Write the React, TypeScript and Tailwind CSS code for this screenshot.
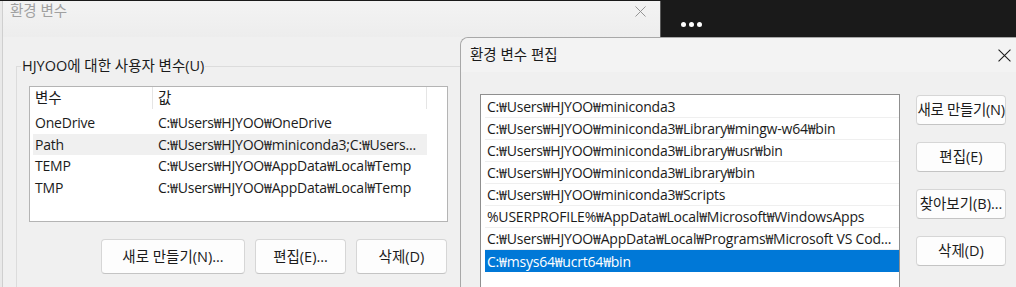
const userVars = [
  { name: 'OneDrive', value: 'C:₩Users₩HJYOO₩OneDrive', hot: false },
  { name: 'Path', value: 'C:₩Users₩HJYOO₩miniconda3;C:₩Users...', hot: true },
  { name: 'TEMP', value: 'C:₩Users₩HJYOO₩AppData₩Local₩Temp', hot: false },
  { name: 'TMP', value: 'C:₩Users₩HJYOO₩AppData₩Local₩Temp', hot: false },
]

const pathEntries = [
  'C:₩Users₩HJYOO₩miniconda3',
  'C:₩Users₩HJYOO₩miniconda3₩Library₩mingw-w64₩bin',
  'C:₩Users₩HJYOO₩miniconda3₩Library₩usr₩bin',
  'C:₩Users₩HJYOO₩miniconda3₩Library₩bin',
  'C:₩Users₩HJYOO₩miniconda3₩Scripts',
  '%USERPROFILE%₩AppData₩Local₩Microsoft₩WindowsApps',
  'C:₩Users₩HJYOO₩AppData₩Local₩Programs₩Microsoft VS Cod...',
  'C:₩msys64₩ucrt64₩bin',
]

function CloseIcon({ className }: { className: string }) {
  return (
    <svg viewBox="0 0 12 12" className={className} fill="none" stroke="currentColor" strokeWidth="1">
      <path d="M0.5 0.5 L11.5 11.5 M11.5 0.5 L0.5 11.5" />
    </svg>
  )
}

function WinButton({ label, className }: { label: string; className: string }) {
  return (
    <button
      className={`flex items-center justify-center whitespace-nowrap rounded-[4px] border border-[#d6d6d6] border-b-[#c4c4c4] bg-[#fdfdfd] text-[14.5px] text-[#1b1b1b] ${className}`}
    >
      {label}
    </button>
  )
}

export default function App() {
  return (
    <div className="relative h-[287px] w-[1016px] overflow-hidden bg-[#1a1a1a] font-['Open_Sans','Noto_Sans_CJK_KR',sans-serif] text-[#1b1b1b]">
      {/* desktop bits behind the windows */}
      <div className="absolute left-[681px] top-[22px] flex gap-[3px]">
        <span className="h-[5px] w-[5px] rounded-full bg-white" />
        <span className="h-[5px] w-[5px] rounded-full bg-white" />
        <span className="h-[5px] w-[5px] rounded-full bg-white" />
      </div>

      {/* back window: 환경 변수 (inactive) */}
      <div className="absolute left-0 top-[1px] flex h-[290px] w-[661px] flex-col border-r border-[#5a5a5a] bg-[#e9e9e9] pl-[2px]">
        <div className="flex h-full flex-col border-l border-[#cfcfcf] bg-[#f0f0f0]">
          <div className="flex h-[36px] shrink-0 items-start justify-between bg-gradient-to-b from-[#f3f3f3] to-[#ededed] pl-[7px] pr-[14px]">
            <span className="text-[14.5px] leading-[20px] text-[#a0a0a0]">환경 변수</span>
            <CloseIcon className="mt-[5px] h-[11px] w-[11px] text-[#8c8c8c]" />
          </div>

          <fieldset className="ml-[13px] mt-[19px] w-[640px] grow border border-[#dcdcdc]">
            <legend className="ml-[4px] px-[1px] text-[14.5px] leading-[20px]">HJYOO에 대한 사용자 변수(U)</legend>
            <div className="pl-[12px]">
              <div className="mt-[10px] h-[136px] w-[419px] border border-[#b4b4b4] bg-white">
                <div className="flex h-[22px] text-[14.5px] leading-[22px]">
                  <div className="w-[123px] border-r border-[#e5e5e5] pl-[5px]">변수</div>
                  <div className="w-[274px] border-r border-[#e5e5e5] pl-[5px]">값</div>
                </div>
                <div className="mt-[3px] pl-[3px]">
                  {userVars.map((v) => (
                    <div
                      key={v.name}
                      className={`flex h-[21.5px] w-[394px] items-center overflow-hidden text-[14px] tracking-[-0.2px] ${v.hot ? 'bg-[#f0f0f0]' : ''}`}
                    >
                      <span className="w-[125px] shrink-0 pl-[2px]">{v.name}</span>
                      <span className="whitespace-nowrap">{v.value}</span>
                    </div>
                  ))}
                </div>
              </div>
              <div className="mt-[17px] flex w-[418px] justify-end gap-[10px]">
                <WinButton label="새로 만들기(N)..." className="h-[35px] w-[144px]" />
                <WinButton label="편집(E)..." className="h-[35px] w-[91px]" />
                <WinButton label="삭제(D)" className="h-[35px] w-[91px]" />
              </div>
            </div>
          </fieldset>
        </div>
      </div>

      {/* front window: 환경 변수 편집 */}
      <div className="absolute bottom-[-4px] left-[460px] right-[-4px] top-[37px] flex flex-col rounded-tl-[8px] border-l border-t border-[#a8a8a8] bg-[#f0f0f0]">
        <div className="flex h-[34px] shrink-0 items-center justify-between rounded-tl-[8px] bg-[#f3f3f3] pl-[9px] pr-[9px]">
          <span className="text-[14.5px] leading-[20px]">환경 변수 편집</span>
          <CloseIcon className="h-[13px] w-[13px] text-[#1b1b1b]" />
        </div>
        <div className="mt-[22px] flex items-start pl-[19px]">
          <div className="h-[200px] w-[420px] border border-[#8f8f8f] bg-white pt-[1px] pl-[4px]">
            {pathEntries.map((p, i) => {
              const selected = i === pathEntries.length - 1
              return (
                <div
                  key={p}
                  className={`flex h-[22px] items-center overflow-hidden whitespace-nowrap pl-[2px] text-[14px] tracking-[-0.2px] ${
                    selected ? 'bg-[#0078d7] text-white' : 'border-b border-[#efefef]'
                  }`}
                >
                  {p}
                </div>
              )
            })}
          </div>
          <div className="ml-[16px] flex w-[90px] flex-col gap-[17px] pt-[1px]">
            <WinButton label="새로 만들기(N)" className="h-[30px] w-[90px] tracking-[-0.3px]" />
            <WinButton label="편집(E)" className="h-[30px] w-[90px]" />
            <WinButton label="찾아보기(B)..." className="h-[30px] w-[90px]" />
            <WinButton label="삭제(D)" className="h-[30px] w-[90px]" />
          </div>
        </div>
      </div>
    </div>
  )
}
